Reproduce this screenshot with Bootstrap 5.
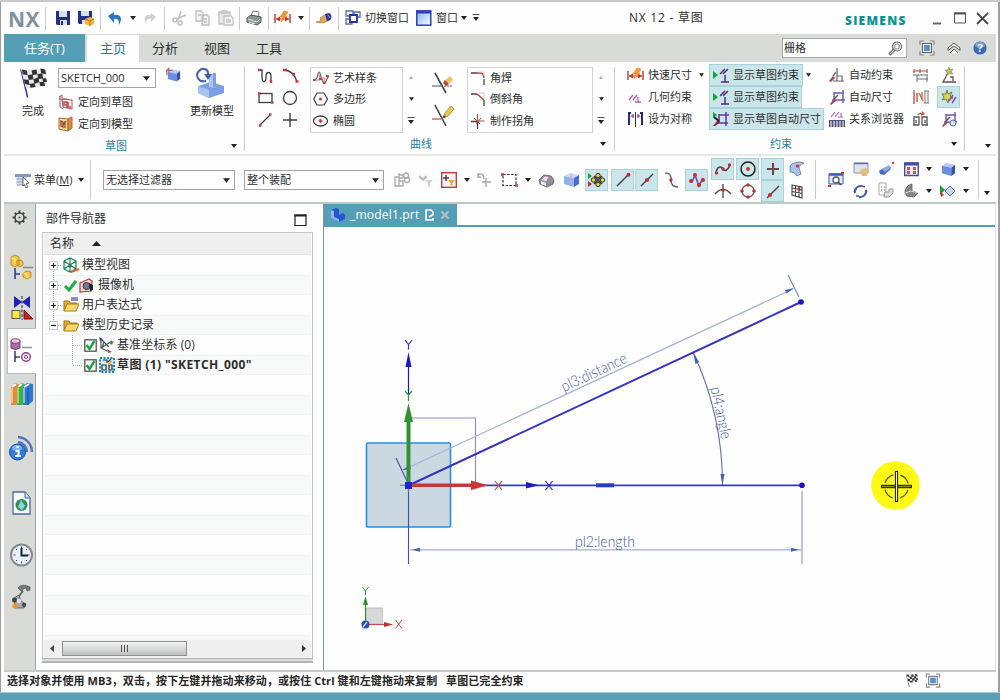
<!DOCTYPE html>
<html lang="zh-CN">
<head>
<meta charset="utf-8">
<title>NX 12 - 草图</title>
<meta name="viewport" content="width=device-width, initial-scale=1">
<link href="https://cdn.jsdelivr.net/npm/bootstrap@5.3.0/dist/css/bootstrap.min.css" rel="stylesheet">
<style>
:root{--teal:#559fb6;--bar:#d9dbd9;--hl:#cbe6ea;--hlb:#a9d3da;--ink:#2e2e2e}
html,body{height:100%;overflow:hidden}
body{font-family:"Open Sans","Noto Sans CJK SC",sans-serif;font-size:11px;line-height:16px;color:var(--ink);background:#fdfefd}
svg{display:block;flex:none;overflow:visible}
.win{width:1000px;height:700px;border-top:2px solid #c9cbca}
.frame{height:690px;border-left:1px solid #999c9b;border-right:2px solid #9ba19f;padding:0 2px 0 3px}
.bar{display:grid;align-items:center;justify-items:start;white-space:nowrap}
.vsep{width:1px;background:#c9cbca;align-self:stretch}
.titlebar{height:32px;padding-left:4px;grid-template-columns:37px 10px 23px 22px 8px 22px 13px 21px 8px 23px 23px 21px 7px 22px 6px 24px 11px 7px 22px 7px 20px 51px 20px 25px 11px 157px 216px 87px 21px 23px 1fr}
.titlebar .vsep{margin:5px 0 4px}
.nxlogo{font:bold 21px/24px "Open Sans",sans-serif;color:#7f929d;letter-spacing:.4px;margin-top:2px}
.wtitle{font-size:12px;letter-spacing:.75px}
.siemens{font:800 12px/14px "Open Sans",sans-serif;color:#0a9391;letter-spacing:1.25px;margin-top:5px}
.tabs{height:28px;background:var(--bar);font-size:13px}
.tabs .rtab{width:52px;text-align:center;line-height:28px}
.rtab.task{width:81px;background:var(--teal);color:#fff;margin-right:2px}
.rtab.on{background:#fdfefd;color:#1d7e9e;margin-top:1px;line-height:26px}
.search{width:125px;height:20px;border:1px solid #a9abaa;background:#fff;padding:0 3px 0 1px;font-size:11px}
.ribbon{height:94px;border-bottom:2px solid #e7e9e8}
.grp{border-right:1px solid #c9cbca;height:84px;margin-top:5px}
.gtitle{color:#2b7f9c;height:16px;line-height:16px}
.gfoot{margin-top:3px}
.tool{height:22px;white-space:nowrap}
.combo{border:1px solid #a4a6a5;background:#fff;display:flex;align-items:center;justify-content:space-between;padding:0 4px 0 2px;white-space:nowrap}
.gal{border:1px solid #d3d5d4;height:66px}
.hl{background:var(--hl);border:1px solid var(--hlb)}
.hl.tool{padding-left:2px}
.hl.cell{padding-left:0}
.selbar{height:48px;border-bottom:2px solid #bdc8c8;padding-left:11px;grid-template-rows:22px 22px;padding-top:2px;grid-template-columns:19px 43px 13px 13px 141px 149px 24px 23px 22px 14px 25px 23px 13px 25px 23px 26px 24px 27px 23px 26px 25px 25px 27px 27px 13px 25px 26px 25px 22px 15px 22px 15px 5px 1fr}
.selbar>*{grid-row:1/3}
.selbar>.r1{grid-row:1}
.selbar>.r2{grid-row:2}
.cell{width:23px;height:22px;display:flex;align-items:center;justify-content:center}
.main{height:466px}
.side{width:32px;background:var(--bar);border-right:1px solid #9fa2a1}
.side>div{display:flex;align-items:center;justify-content:center;padding-left:4px}
.side>.on{background:#fdfefd;border:1px solid #b9bbba;border-right:0;margin:0 -1px 0 3px;padding-left:0}
.nav-pane{width:288px;padding-left:6px;padding-right:10px;border-right:1px solid #84939b;font-size:12px}
.tree{border:1px solid #c4c6c5;border-bottom:0;height:426px;padding:0 1px}
.thead{height:22px;background:#eeefee;border-bottom:1px solid #dfe1e0;padding-left:6px}
.rows{height:385px;overflow:hidden;background:repeating-linear-gradient(#fdfefd 0 20px,#f1f3f2 20px 21px,#f8faf9 21px 39px,#f1f3f2 39px 40px)}
.trow{height:20px;white-space:nowrap}
.trow b{letter-spacing:.4px}
.hscroll{height:17px;background:#eeefee;padding:0 5px 0 6px}
.thumb{width:125px;height:15px;border:1px solid #8f9190;background:linear-gradient(#f4f4f4,#d9dadb 50%,#bfc1c4);margin-left:8px;gap:2px}
.thumb i{width:1px;height:7px;background:#555}
.under{height:5px;border-top:1px solid #a7a9a8;border-bottom:2px solid #b3b5b4;background:#dfe1e0}
.ftabs{height:23px;border-bottom:2px solid var(--teal)}
.ftab{width:133px;background:var(--teal);color:#fff;font-size:12px;letter-spacing:.2px}
.status{height:21px;font-weight:700;border-top:2px solid #c9cbca;font-size:11px;color:#262626;letter-spacing:.08px;padding:0 0 2px 3px}
.foot{height:8px;background:#5c9fb3;border-top:1px solid #a5c8d2}
.dim{font-family:Lato,"Open Sans",sans-serif;font-weight:300;fill:#3e56ad;font-size:15.5px}
</style>
</head>
<body>
<svg width="0" height="0" class="position-absolute">
<defs>
<symbol id="car" viewBox="0 0 6 4"><path d="M0 0h6L3 4z" fill="#222"/></symbol>
<symbol id="carb" viewBox="0 0 8 8"><path d="M.5 .6h7" stroke="#444"/><path d="M1 3h6L4 7z" fill="#222"/></symbol>
<symbol id="fs" viewBox="0 0 16 16"><path d="M1 5V1h4M11 1h4v4M15 11v4h-4M5 15H1v-4" fill="none" stroke="#888" stroke-width="1.2"/><rect x="3.5" y="3.5" width="9" height="9" fill="#fff" stroke="#56606a"/><rect x="5" y="5" width="6" height="6" fill="#5b8ec8"/></symbol>
<symbol id="flag" viewBox="0 0 32 32"><path d="M3 2l7 29" stroke="#3834b4" stroke-width="1.6"/><path d="M3 1c8 4 16-2 24 1l4 17c-9-2-15 5-23 2z" fill="#e9e9e9"/><path d="M4 2l5 1 1 5-5-1zM14 3l5-1 1 5-5 1zM23 1l5 1 1 5-5-1zM10 8l5-1 1 5-5 1zM20 7l5-1 1 5-5 1zM6 12l5 1 1 5-5-1zM16 12l5-2 1 5-5 2zM25 11l4 0 1 4-4 0zM12 17l5-1 1 4-5 1zM22 15l5 0 1 4-5 0z" fill="#333"/></symbol>
<symbol id="dimq" viewBox="0 0 17 16"><path d="M1 4v9M16 4v9" stroke="#c3322c" stroke-width="1.4"/><path d="M2 9h13" stroke="#c3322c"/><path d="M2 9l4-2.5v5zM15 9l-4-2.5v5z" fill="#c3322c"/><path d="M10 1l4 1-3 4h2l-6 6 2-5H6z" fill="#f79a2c" stroke="#dd6a1f" stroke-width=".5"/></symbol>
<symbol id="showc" viewBox="0 0 18 16"><path d="M1 4l5 4-5 4z" fill="#16a338"/><path d="M8 7l5-5M11 7l5-5M9 15h8M13 8v7" fill="none" stroke="#5b2a78" stroke-width="1.5"/></symbol>
<symbol id="autod" viewBox="0 0 16 16"><path d="M5 3v10M14 1v13M3 11h13M5 4h10" stroke="#6d57b5" stroke-width="1.4" fill="none"/><path d="M1 15l4-5 2 2-5 4z" fill="#a2474b"/><path d="M5 10l4-4" stroke="#555" stroke-width="1.5"/></symbol>
<symbol id="fold" viewBox="0 0 16 16"><path d="M1 14V4h5l1 2h7v3" fill="#e6b030" stroke="#9d721a"/><path d="M1 14l3-7h12l-3 7z" fill="#fbd867" stroke="#a67a1c"/></symbol>
<symbol id="cube" viewBox="0 0 16 16"><path d="M1 4l5-3 9 2-4 3z" fill="#b6c8f3"/><path d="M1 4l10 2v9L1 12z" fill="#6c8ee0"/><path d="M11 6l4-3v9l-4 3z" fill="#3554b0"/></symbol>
<symbol id="chk" viewBox="0 0 13 13"><rect x=".8" y=".8" width="11.4" height="11.4" fill="#fff" stroke="#444" stroke-width="1.2"/><path d="M2.5 6l3 4 5-8" fill="none" stroke="#1aa53c" stroke-width="2.4"/></symbol>
</defs>
</svg>
<div class="win">
<div class="frame">

<header class="bar titlebar">
<span class="nxlogo">NX</span><i class="vsep"></i>
<svg width="16" height="16"><path d="M1 1h14v14H2L1 14z" fill="#24327f"/><path d="M4 1h8v6H4z" fill="#d5e2f5"/><path d="M5 10h7v5H5z" fill="#dadde4"/><path d="M6 11h2v4H6z" fill="#24327f"/></svg>
<svg width="17" height="17"><path d="M0 1h14v13H1L0 13z" fill="#24327f"/><path d="M3 1h8v5H3z" fill="#d5e2f5"/><path d="M4 10h6v4H4z" fill="#ddd"/><path d="M7 9l5-2 4 2v5l-4 2-5-2z" fill="#f0b63a"/><path d="M7 9l5 2v5M12 11l4-2" fill="none" stroke="#b67b17"/></svg>
<i class="vsep"></i>
<svg width="14" height="16"><path d="M0 6l6-4v3c7-1 9 4 5 10 0-5-1-7-5-6v4z" fill="#2b77c7"/></svg>
<svg width="6" height="4"><use href="#car"/></svg>
<svg width="14" height="16"><path d="M13 7L8 3v2C2 4 0 9 3 14c0-4 2-6 5-5v3z" fill="#cfd0d0"/></svg>
<i class="vsep"></i>
<svg width="15" height="16" fill="none" stroke="#bfc0c0" stroke-width="1.6"><path d="M9 1L6 10M14 5L4 9"/><circle cx="3" cy="10" r="2"/><circle cx="8" cy="13" r="2"/></svg>
<svg width="16" height="16" fill="#f4f4f4" stroke="#bcbebe" stroke-width="1.3"><path d="M1 1h5l2 2v8H1zM7 5h5l2 2v8H7z"/><path d="M9 9h3M9 12h3M3 5h3"/></svg>
<svg width="16" height="16" fill="#e6e6e6" stroke="#c1c2c2" stroke-width="1.3"><path d="M1 2h11v12H1z"/><path d="M4 1h5v2H4z"/><path d="M6 6h7l2 2v7H6z" fill="#f6f6f6"/><path d="M8 10h5M8 12h5"/></svg>
<i class="vsep"></i>
<svg width="16" height="16"><path d="M5 6l2-5 6 1-1 5z" fill="#fff" stroke="#777"/><path d="M1 8l4-3 10 2v5l-4 3-10-3z" fill="#8a9496" stroke="#4c5556"/><path d="M2 9l9 3 3-3" fill="none" stroke="#e9ecec"/><path d="M3 12l6 2" stroke="#fff"/></svg>
<i class="vsep"></i>
<svg width="17" height="16"><use href="#dimq"/></svg>
<svg width="6" height="4"><use href="#car"/></svg>
<i class="vsep"></i>
<svg width="17" height="16"><path d="M0 12l5-1-1-3 6-4 4 6-7 3z" fill="#dba85f" stroke="#a77534" stroke-width=".7"/><path d="M9 4l4-1c3 1 3 5 1 7l-3 1z" fill="#3136a0"/><path d="M12 5l2 3" stroke="#aab0ee"/></svg>
<i class="vsep"></i>
<svg width="16" height="16" fill="#fff" stroke="#5b6f9c" stroke-width="1.3"><path d="M1 1h7v5H1zM1 9h6v5H1zM9 2h6v5H9z"/><path d="M5 5h7v7H5z" stroke="#1f2fae" stroke-width="1.8"/></svg>
<span>切换窗口</span>
<svg width="16" height="16"><defs><linearGradient id="wg" x1="0" y1="0" x2="1" y2="1"><stop offset="0" stop-color="#7fb0ee"/><stop offset="1" stop-color="#fff"/></linearGradient></defs><rect x=".8" y=".8" width="14" height="14.4" fill="url(#wg)" stroke="#2334ad" stroke-width="1.4"/><path d="M1 2.4h14" stroke="#2334ad" stroke-width="2"/></svg>
<span>窗口</span>
<svg width="6" height="4"><use href="#car"/></svg>
<svg width="8" height="8"><use href="#carb"/></svg>
<span class="wtitle">NX 12 - 草图</span>
<span class="siemens">SIEMENS</span>
<svg width="9" height="16"><path d="M1 13.500h8" stroke="#666" stroke-width="2"/></svg>
<svg width="13" height="14"><path d="M1.500 2h11v10h-11z" fill="none" stroke="#555"/><path d="M1 2.500h12" stroke="#555" stroke-width="2"/></svg>
<svg width="13" height="13"><path d="M1 1l11 11M12 1L1 12" stroke="#4a4a4a" stroke-width="1.8"/></svg>
</header>

<nav class="tabs d-flex">
<div class="rtab task">任务(T)</div><div class="rtab on">主页</div><div class="rtab">分析</div><div class="rtab">视图</div><div class="rtab">工具</div>
<div class="ms-auto d-flex align-items-center pe-2">
<div class="search d-flex align-items-center justify-content-between"><span>栅格</span>
<svg width="15" height="15" fill="#fff" stroke="#666" stroke-width="1.2"><circle cx="9" cy="5.500" r="4.500"/><circle cx="9" cy="5.500" r="2.500" stroke="#999"/><path d="M5.500 8L1 12.500 2.500 14 7 9.500z"/></svg></div>
<svg width="16" height="16" style="margin-left:12px"><use href="#fs"/></svg>
<svg width="14" height="14" style="margin-left:12px" fill="#fff" stroke="#555"><path d="M1 7l6-5 6 5v2.500L7 5 1 9.500zM3 12l4-4 4 4"/></svg>
<svg width="14" height="14" style="margin-left:12px;margin-right:1px"><circle cx="7" cy="7" r="6.600" fill="#3a67b8"/><ellipse cx="7" cy="4" rx="5" ry="3" fill="#7ea1dd"/><text x="7" y="11" text-anchor="middle" font-size="11" font-weight="700" fill="#fff">?</text></svg>
</div>
</nav>

<section class="ribbon d-flex">
<!-- sketch group -->
<div class="grp d-flex flex-column" style="width:241px">
<div class="d-flex" style="height:70px">
<div class="text-center" style="width:40px;margin-left:9px"><svg class="mx-auto" width="31" height="32"><use href="#flag"/></svg><div style="margin-top:4px">完成</div></div>
<div style="width:98px;margin-left:5px">
<div class="combo" style="height:20px;margin-top:1px;padding-right:5px"><span>SKETCH_000</span><svg width="7" height="5"><use href="#car"/></svg></div>
<div class="tool d-flex align-items-center" style="gap:5px;margin-top:3px"><svg width="15" height="16"><path d="M4 5l10 1v9l-9-2z" fill="#fff" stroke="#b4464a"/><path d="M1 3l3-2v3M2 2v11l3 2M1 5h8" fill="none" stroke="#a0585c"/><path d="M6 8h3v3H6zM10 8v5h3M8 13h2" fill="none" stroke="#b8484d" stroke-width="1.500"/></svg>定向到草图</div>
<div class="tool d-flex align-items-center" style="gap:5px"><svg width="15" height="16"><path d="M1 2l9 1v12l-9-2z" fill="#f8d8a2" stroke="#a8692c"/><path d="M10 3l4-2v11l-4 3z" fill="#e58b3c" stroke="#a8692c"/><path d="M3 5l2 1v5l-2-1zM7 5v7M5 9l3-4" fill="none" stroke="#8a3c2a" stroke-width="1.200"/></svg>定向到模型</div>
</div>
<svg width="15" height="16" style="margin:0 0 0 10px" viewBox="0 0 16 16"><use href="#cube" x="1" y="1" width="15" height="15"/><path d="M0 4l3-3v5M1 8V3h6" fill="none" stroke="#b4606a" stroke-width="1.200"/></svg>
<div class="text-center" style="width:48px;margin-left:7px"><svg class="mx-auto" width="34" height="32"><path d="M3 19l13-4 13 4v7l-15 5-11-5z" fill="#7ba0e4"/><path d="M3 19l11 4v8L3 26z" fill="#a7c2f2"/><path d="M14 7l7-1v15l-7-1z" fill="#aec6f5"/><path d="M18 6h3v15l-3-1z" fill="#7f9fe0"/><path d="M11 14C3 16 0 8 4 4c4-4 10-2 9 4" fill="none" stroke="#4461b2" stroke-width="2"/><path d="M9 7h8l-4 6z" fill="#4461b2"/></svg><div style="margin-top:4px">更新模型</div></div>
</div>
<div class="gfoot d-flex align-items-center"><span class="gtitle" style="margin-left:101px;margin-right:104px">草图</span><svg width="6" height="4"><use href="#car"/></svg></div>
</div>
<!-- curve group -->
<div class="grp d-flex flex-column" style="width:370px">
<div class="d-flex" style="height:70px">
<div class="d-grid" style="grid-template-columns:25px 24px;grid-auto-rows:22px;margin-left:12px;margin-top:-2px;align-items:center;align-content:start">
<svg width="17" height="16" fill="none" stroke="#3d3d3d" stroke-width="1.300"><path d="M2 2h3v7c0 6 4 6 4 0s5-6 5 0v5"/><path d="M1 2h2.500M14 12v3" stroke="#c63c3c" stroke-width="2.400"/></svg>
<svg width="17" height="16" fill="none" stroke="#3d3d3d" stroke-width="1.300"><path d="M3 2c7 1 10 5 12 12"/><path d="M1 2h4M10 6h3M13.500 13.500h3" stroke="#c63c3c" stroke-width="2.600"/></svg>
<svg width="17" height="16"><rect x="2" y="3.500" width="13" height="9" fill="none" stroke="#3d3d3d" stroke-width="1.300"/><path d="M1 3.500h2.500M14 12.500h2.500" stroke="#c63c3c" stroke-width="2.500"/></svg>
<svg width="17" height="16"><circle cx="8" cy="8" r="6.500" fill="none" stroke="#3d3d3d" stroke-width="1.300"/></svg>
<svg width="17" height="16"><path d="M3 13L13 3" stroke="#3d3d3d" stroke-width="1.300"/><path d="M2 13.500h2.500M12 2.500h2.500" stroke="#c63c3c" stroke-width="2.500"/></svg>
<svg width="17" height="16"><path d="M8 1v14M1 8h14" stroke="#3d3d3d" stroke-width="1.400"/></svg>
</div>
<div class="gal" style="width:93px;padding-left:2px;margin-left:4px">
<div class="tool d-flex align-items-center" style="gap:5px;height:20px"><svg width="15" height="16"><path d="M1 10c5 0 3-8 5-8s1 6 4 10 3-4 6-6" fill="none" stroke="#555" stroke-width="1.100"/><path d="M1 10h6L5.500 2M9 8h3l-1 6z" fill="none" stroke="#d07070" stroke-width=".9"/><path d="M0 10h2.500M6 9h3M10 13h2.500M13 6h2.500" stroke="#c63c3c" stroke-width="2.200"/></svg>艺术样条</div>
<div class="tool d-flex align-items-center" style="gap:5px"><svg width="15" height="16"><path d="M4 2h7l3.500 6-3.500 6H4L.7 8z" fill="none" stroke="#3d3d3d" stroke-width="1.200"/><circle cx="7.500" cy="8" r="1.600" fill="#c63c3c"/></svg>多边形</div>
<div class="tool d-flex align-items-center" style="gap:5px"><svg width="15" height="16"><ellipse cx="7.500" cy="8" rx="7" ry="5" fill="none" stroke="#3d3d3d" stroke-width="1.300"/><path d="M7.500 6v4M5.500 8h4" stroke="#c63c3c" stroke-width="1.700"/></svg>椭圆</div>
</div>
<div class="d-flex flex-column align-items-center" style="width:8px;margin-left:4px;padding-top:9px"><svg width="4" height="3"><path d="M0 3h4L2 0z" fill="#aaa"/></svg><svg width="5" height="4" style="margin-top:18px"><use href="#car"/></svg><svg width="8" height="8" style="margin-top:16px"><use href="#carb"/></svg></div>
<div style="width:22px;margin-left:17px;margin-top:4px">
<svg width="23" height="24"><path d="M3 2l11 20" stroke="#444" stroke-width="1.600"/><path d="M0 15h9" stroke="#777" stroke-width="1.300"/><path d="M12 15h9" stroke="#444" stroke-dasharray="2 1"/><path d="M12 10l6-5 3 4-6 5z" fill="#eec060"/><path d="M11 12l2-3 4 4-3 2z" fill="#bc4638"/></svg>
<svg width="23" height="24" style="margin-top:9px"><path d="M3 1l11 21" stroke="#444" stroke-width="1.600"/><path d="M0 15h9" stroke="#c9504c" stroke-width="1.300"/><path d="M11 14l2-5 6-7 3 3-6 7z" fill="#eec649" stroke="#8d7231" stroke-width=".7"/><path d="M11 14l1-3 2 2z" fill="#333"/></svg>
</div>
<div class="gal" style="width:126px;padding-left:3px;margin-left:13px">
<div class="tool d-flex align-items-center" style="gap:5px;height:20px"><svg width="14" height="16"><path d="M0 3h6M13 9v6" stroke="#444" stroke-width="1.300"/><path d="M6 3h3q4 0 4 5" fill="none" stroke="#d03a36" stroke-width="1.300"/><path d="M8 2h5v4" fill="none" stroke="#ccc"/></svg>角焊</div>
<div class="tool d-flex align-items-center" style="gap:5px"><svg width="14" height="16"><path d="M0 3h6M13 9v6" stroke="#444" stroke-width="1.300"/><path d="M6 3l7 6" fill="none" stroke="#d03a36" stroke-width="1.400"/><path d="M8 2h5v4" fill="none" stroke="#ccc"/></svg>倒斜角</div>
<div class="tool d-flex align-items-center" style="gap:5px"><svg width="14" height="16"><path d="M0 8.500h6M6.500 9v7" stroke="#444" stroke-width="1.300"/><path d="M6.500 1v7h7" fill="none" stroke="#a55" stroke-width="1.200"/><path d="M3 5l6 6M10 5l-5 6" stroke="#c23b37"/></svg>制作拐角</div>
</div>
<div class="d-flex flex-column align-items-center" style="width:8px;margin-left:4px;padding-top:9px"><svg width="4" height="3"><path d="M0 3h4L2 0z" fill="#aaa"/></svg><svg width="5" height="4" style="margin-top:18px"><use href="#car"/></svg><svg width="8" height="8" style="margin-top:16px"><use href="#carb"/></svg></div>
</div>
<div class="gfoot d-flex align-items-center"><span class="gtitle" style="margin-left:165px;margin-right:168px">曲线</span><svg width="6" height="4"><use href="#car"/></svg></div>
</div>
<!-- constraint group -->
<div class="grp d-flex flex-column" style="width:350px">
<div class="d-flex" style="height:70px;margin-top:-3px">
<div style="width:94px;padding-left:12px">
<div class="tool d-flex align-items-center"><svg width="17" height="16" class="me-1"><use href="#dimq"/></svg>快速尺寸<svg width="5" height="4" style="margin-left:7px"><use href="#car"/></svg></div>
<div class="tool d-flex align-items-center"><svg width="17" height="16" class="me-1"><path d="M2 11l4-5M6 11l4-5M8 13h6M11 8v5" fill="none" stroke="#b35dbb" stroke-width="1.300"/></svg>几何约束</div>
<div class="tool d-flex align-items-center"><svg width="17" height="16" class="me-1"><path d="M4 2H2v12M13 2h2v12" fill="none" stroke="#2b2a7a" stroke-width="2"/><path d="M8.500 1v15" stroke="#333"/><path d="M4 5h3M10 5h3M6 3v4M11 3v4" stroke="#a24bab" stroke-width="1.300"/></svg>设为对称</div>
</div>
<div style="width:116px">
<div class="d-flex align-items-center"><div class="tool hl d-flex align-items-center" style="width:94px"><svg width="18" height="16" style="margin-right:3px"><use href="#showc"/></svg>显示草图约束</div><svg width="5" height="4" style="margin-left:3px"><use href="#car"/></svg></div>
<div class="tool hl d-flex align-items-center" style="width:93px"><svg width="18" height="16" style="margin-right:3px"><use href="#showc"/></svg>显示草图约束</div>
<div class="tool hl d-flex align-items-center" style="width:115px"><svg width="18" height="16" style="margin-right:3px"><path d="M7 3v9M14 1v14M4 12h12M7 4h10" stroke="#6b2fa0" stroke-width="1.500" fill="none"/><path d="M1 1l4 3-4 3z" fill="#16a338"/><path d="M1 15l5-6 2 2-5 4z" fill="#8a1f33"/><path d="M2 6l5 4" stroke="#222" stroke-width="2"/></svg>显示草图自动尺寸</div>
</div>
<div style="padding-left:4px;width:87px">
<div class="tool d-flex align-items-center"><svg width="16" height="16" class="me-1"><path d="M8 1v13M4 14h11M8 9h5v5" fill="none" stroke="#666" stroke-width="1.200"/><path d="M0 14l4-5 2 2-4 4z" fill="#a2474b"/><path d="M4 9l3-4" stroke="#777" stroke-width="1.500"/></svg>自动约束</div>
<div class="tool d-flex align-items-center"><svg width="16" height="16" class="me-1"><use href="#autod"/></svg>自动尺寸</div>
<div class="tool d-flex align-items-center"><svg width="16" height="16" class="me-1"><path d="M2 6l4-5M6 6l4-5M9 6h5M12 2v4" stroke="#b35dbb" stroke-width="1.200"/><path d="M0 9h16v7H0z" fill="#50547f"/><path d="M2 10v6M5 10v6M8 10v6M11 10v6M14 10v6" stroke="#fff"/></svg>关系浏览器</div>
</div>
<div style="width:24px;padding-left:1px">
<div class="tool d-flex align-items-center"><svg width="16" height="16"><path d="M1 4h13M1 2v4M14 2v4M7 2v4" stroke="#c3423c" stroke-width="1.200"/><path d="M0 8h15M4 12h11M4 8v7M14 8v7" stroke="#666a85"/></svg></div>
<div class="tool d-flex align-items-center"><svg width="16" height="16"><path d="M1 1v14M4 4v9" stroke="#c3423c" stroke-width="1.300"/><path d="M6 4l4 8M9 3v8" stroke="#d36a3c" stroke-width="1.400"/><path d="M12 2v12M15 2v12M11 2h5M11 14h5" stroke="#777"/></svg></div>
<div class="tool d-flex align-items-center"><svg width="16" height="16"><path d="M1 14V6h5v8M9 14V6h5v8M0 14h6M9 14h6M3 9v3M12 9v3" fill="none" stroke="#555" stroke-width="1.300"/><path d="M5 4c1-2 3-2 5-1" fill="none" stroke="#d1553b" stroke-width="1.400"/><path d="M9 0l3 3-4 2z" fill="#d1553b"/></svg></div>
</div>
<div style="width:24px;padding-left:1px">
<div class="tool cell"><svg width="16" height="16"><path d="M7 6L2 15h13M9 10h3v4" fill="none" stroke="#555" stroke-width="1.300"/><path d="M8 0l1 3 3-1-2 3 2 2-4 0-2 1 0-3-2-2 3 0z" fill="#c4c159" stroke="#6b6b30" stroke-width=".5"/></svg></div>
<div class="tool cell hl"><svg width="16" height="16"><path d="M6 1l1 4 4-2-2 4 3 2-4 1-1 4-2-4-4 1 2-3-2-3 4 0z" fill="#d8d94c" stroke="#4e5628" stroke-width=".7"/><path d="M8 12l4-6M11 14l4-6" stroke="#8c47a4" stroke-width="1.400"/></svg></div>
<div class="tool cell"><svg width="16" height="16"><use href="#autod"/><circle cx="12" cy="12" r="3" fill="#dfe1fb" stroke="#5763b9"/></svg></div>
</div>
</div>
<div class="d-flex align-items-center" style="margin-top:6px"><span class="gtitle" style="margin-left:155px;margin-right:159px">约束</span><svg width="6" height="4"><use href="#car"/></svg></div>
</div>
<svg width="6" height="4" style="margin:82px 0 0 20px"><use href="#car"/></svg>
</section>

<!-- selection bar -->
<section class="bar selbar">
<svg width="16" height="16"><path d="M1 4h11v9H1z" fill="#d9deee"/><path d="M0 2h16v3H0z" fill="#8695c4"/><path d="M2 7h9M2 10h9M2 13h9" stroke="#8d96ad"/><path d="M8 5l6 6-3 .5 2 3.500-2 1-1.500-3.500L8 14z" fill="#fff" stroke="#444" stroke-width=".8"/></svg>
<span>菜单(<u>M</u>)</span>
<svg width="6" height="4" style="margin-left:1px"><use href="#car"/></svg>
<i class="vsep" style="margin:2px 0 3px"></i>
<div class="combo" style="width:132px;height:20px"><span>无选择过滤器</span><svg width="7" height="5"><use href="#car"/></svg></div>
<div class="combo" style="width:140px;height:20px"><span>整个装配</span><svg width="7" height="5"><use href="#car"/></svg></div>
<svg width="16" height="16" fill="none" stroke="#a9abab" stroke-width="1.300" style="margin-left:1px"><path d="M1 5h4v9H1zM5 9h4v5H5zM5 1v5h4V3H5"/><circle cx="12" cy="3.500" r="2.500"/><circle cx="13" cy="8" r="2.500"/></svg>
<svg width="16" height="16" style="margin-left:1px"><path d="M1 3l4 3 3-3 1 3-4 3-4-3z" fill="#bbb"/><path d="M7 8h8l-3 3v4l-2-1v-3z" fill="#d0d1d0"/></svg>
<svg width="16" height="16" style="margin-left:1px"><rect x=".7" y=".7" width="14.600" height="14.600" fill="#fff6f4" stroke="#b9403f" stroke-width="1.400"/><path d="M5 3v6M2 6h6" stroke="#444" stroke-width="1.500"/><path d="M7 8h7l-2.500 3v3l-2-1v-2z" fill="#eda53a"/></svg>
<svg width="6" height="4" style="margin-left:2px"><use href="#car"/></svg>
<svg width="15" height="16" fill="none" stroke="#a6a8a8" stroke-width="1.400"><path d="M2 4c2-4 6-2 6 3M2 1v4h3M10 6v9M6 10h9"/></svg>
<svg width="17" height="16"><rect x="2" y="2.500" width="13" height="11" fill="none" stroke="#333" stroke-width="1.200" stroke-dasharray="2.500 1.500"/><path d="M0 2.500h3M14 13.500h3" stroke="#c63c3c" stroke-width="2.600"/></svg>
<svg width="6" height="4" style="margin-left:1px"><use href="#car"/></svg>
<svg width="16" height="16" style="margin-left:1px"><path d="M1 8l5-5 7 1 3 4-1 4-6 3-7-3z" fill="#8b919f" stroke="#565c68" stroke-width=".8"/><path d="M3 8l4-4 4 1-3 5zM9 10l6-2" fill="#dfe1e6" stroke="#c28084" stroke-width=".7"/><path d="M3 9l5 2v3l-5-2z" fill="#e8eaf0"/></svg>
<svg width="17" height="16" style="margin-left:1px"><path d="M1 4l6-3 9 2-5 3z" fill="#c7dcf8"/><path d="M1 4l10 2v9L1 12z" fill="#8fb2ee"/><path d="M11 6l5-3v9l-5 3z" fill="#4a6dd0"/><path d="M8 2v10" stroke="#e7a4a8"/></svg>
<div class="cell hl"><svg width="17" height="16"><path d="M0 1l4 3-4 3z" fill="#179c35"/><path d="M0 9l4 3-4 3z" fill="#c52f2f"/><g fill="#f1cf40" stroke="#333"><circle cx="10" cy="3.500" r="2.200"/><circle cx="10" cy="12.500" r="2.200"/><circle cx="5.500" cy="8" r="2.200"/><circle cx="14.500" cy="8" r="2.200"/></g><path d="M6 4l8 8M14 4l-8 8" stroke="#333" stroke-width="1.600"/></svg></div>
<div class="cell hl"><svg width="16" height="16"><path d="M2 14L13 3" stroke="#444" stroke-width="1.500"/><circle cx="13.500" cy="2.800" r="2" fill="#c22f2f"/></svg></div>
<div class="cell hl"><svg width="16" height="16"><path d="M2 14L14 2" stroke="#444" stroke-width="1.500"/><circle cx="8" cy="8" r="2" fill="#c22f2f"/></svg></div>
<svg width="14" height="16" style="margin-left:3px"><path d="M0 1c5 0 6 2 6 7s2 7 7 7" fill="none" stroke="#666" stroke-width="1.500"/><circle cx="6" cy="8" r="1.700" fill="#c22f2f"/></svg>
<div class="cell hl"><svg width="16" height="16"><path d="M1 10h2l3-7 4 11 4-8" fill="none" stroke="#7a4fae" stroke-width="1.700"/><g fill="#c22f2f"><circle cx="2" cy="9" r="2"/><circle cx="6" cy="3" r="2"/><circle cx="10" cy="13" r="2"/><circle cx="14" cy="8" r="2"/></g></svg></div>
<div class="cell hl r1" style="grid-column:21"><svg width="16" height="16"><path d="M1 12c1-7 5-7 7-4s5 1 7-4" fill="none" stroke="#444" stroke-width="1.500"/><g fill="#c22f2f"><circle cx="1.500" cy="12" r="1.700"/><circle cx="8" cy="8" r="1.700"/><circle cx="14.500" cy="4" r="1.700"/></g></svg></div>
<div class="cell r2" style="grid-column:21"><svg width="16" height="16"><path d="M0 11c5-6 11-6 16 0M8 1v14" fill="none" stroke="#555" stroke-width="1.400"/><circle cx="8" cy="7" r="1.700" fill="#c22f2f"/></svg></div>
<div class="cell hl r1" style="grid-column:22"><svg width="16" height="16"><circle cx="8" cy="8" r="7" fill="none" stroke="#222" stroke-width="1.500"/><circle cx="8" cy="8" r="1.900" fill="#c22f2f"/></svg></div>
<div class="cell r2" style="grid-column:22"><svg width="16" height="16"><circle cx="8" cy="8" r="6" fill="none" stroke="#666" stroke-width="1.400"/><g fill="#c22f2f"><circle cx="8" cy="2" r="1.800"/><circle cx="8" cy="14" r="1.800"/><circle cx="2" cy="8" r="1.800"/><circle cx="14" cy="8" r="1.800"/></g></svg></div>
<div class="cell hl r1" style="grid-column:23"><svg width="16" height="16"><path d="M8 2v12M2 8h12" stroke="#222" stroke-width="1.500"/><circle cx="8" cy="8" r="1.500" fill="#c22f2f"/></svg></div>
<div class="cell hl r2" style="grid-column:23"><svg width="16" height="16"><path d="M2 15L14 3" stroke="#444" stroke-width="1.500"/><circle cx="5" cy="12" r="2" fill="#c22f2f"/></svg></div>
<svg class="r1" style="grid-column:24;margin-left:1px" width="16" height="16"><path d="M1 5c2-3 6-4 10-4l4 1c-3 1-5 3-5 5l2 6-4 2c-2-3-4-4-7-4z" fill="#a7c4ec" stroke="#56779f" stroke-width=".8"/><circle cx="8.500" cy="5" r="1.600" fill="#c22f2f"/></svg>
<svg class="r2" style="grid-column:24;margin-left:3px" width="13" height="16"><path d="M1 2l10 2v11L1 12zM4.500 3v10M8 3v11M1 5l10 2M1 8.500l10 2" fill="none" stroke="#444" stroke-width="1.100"/><circle cx="8" cy="6" r="1.500" fill="#c22f2f"/></svg>
<i class="vsep" style="grid-column:25;margin:2px 0 3px"></i>
<svg style="grid-column:26" width="16" height="16"><path d="M1 2h14v10H1z" fill="#e5ebfa" stroke="#4758ad"/><path d="M1 2.500h14" stroke="#4758ad" stroke-width="2.500"/><circle cx="8" cy="8" r="3" fill="#fff" stroke="#555" stroke-width="1.300"/><path d="M10 10l3 3" stroke="#555" stroke-width="1.700"/><path d="M0 14h3M13 1h3" stroke="#c33" stroke-width="2"/></svg>
<svg class="r1" style="grid-column:27" width="16" height="16"><path d="M1 2h14v10H1z" fill="#dfe3ef" stroke="#8d95a5"/><path d="M1 2.500h14" stroke="#5c6ea6" stroke-width="1.500"/><path d="M9 8l4-1 2 3-1 5H9L7 10z" fill="#e6bd7e"/></svg>
<svg class="r2" style="grid-column:27" width="15" height="15" fill="none" stroke="#425c9f" stroke-width="2"><path d="M2 9A6 6 0 0 1 9 2M13 6a6 6 0 0 1-7 7"/><path d="M3 12h3M9 2l3 1M1 8l2-3M14 7l-2 3" stroke-width="1.500"/></svg>
<svg class="r1" style="grid-column:28" width="16" height="16"><path d="M0 10l3-2 7-3 2 2-1 2-6 5-4-1z" fill="#4b67c5"/><path d="M3 8l7-4 2 3-6 4z" fill="#91a6e6"/><circle cx="14" cy="2" r="1.300" fill="#d44"/></svg>
<svg class="r2" style="grid-column:28;margin-left:-1px" width="16" height="16"><path d="M1 0h7v12H1z" fill="#fff" stroke="#aaa"/><path d="M3 4h1M6 4h1M3 7h1M6 7h1" stroke="#999" stroke-width="1.500"/><path d="M7 9h4V6h4v4l-4 4H6z" fill="#ddd" stroke="#999"/></svg>
<svg class="r1" style="grid-column:29" width="15" height="15"><path d="M.7 1h13.600v12.500H.7z" fill="#eef0fb" stroke="#3e4da7" stroke-width="1.400"/><path d="M1 2h13" stroke="#3e4da7" stroke-width="3"/><path d="M3 5h3v7H3zM9 5h3v7H9z" fill="#c6564c"/><path d="M2 8.500h11" stroke="#eef0fb"/></svg>
<svg class="r2" style="grid-column:29" width="15" height="16"><path d="M1 10C1 5 4 2 8 1v7l6 2-4 4-7-1z" fill="#868889" stroke="#555" stroke-width=".8"/><path d="M1 10l6-2 7 2" fill="none" stroke="#d8d8d8"/></svg>
<svg class="r1" style="grid-column:30" width="6" height="4"><use href="#car"/></svg>
<svg class="r2" style="grid-column:30" width="6" height="4"><use href="#car"/></svg>
<svg class="r1" style="grid-column:31" width="15" height="15" viewBox="0 0 16 16"><use href="#cube"/></svg>
<svg class="r2" style="grid-column:31;margin-left:-2px" width="17" height="16"><path d="M1 2l5 5-5 5z" fill="#1f9d3b"/><path d="M1 8l4 4-3 2z" fill="#c33"/><path d="M11 3l5 5-5 5-5-5z" fill="#cbd5f0" stroke="#5f6fb0"/></svg>
<svg class="r1" style="grid-column:32" width="6" height="4"><use href="#car"/></svg>
<svg class="r2" style="grid-column:32" width="6" height="4"><use href="#car"/></svg>
<i class="vsep" style="grid-column:33;margin:2px 0 3px"></i>
<svg class="r2" style="grid-column:34;margin:4px 0 0 1px" width="6" height="4"><use href="#car"/></svg>
</section>

<main class="main d-flex">
<aside class="side d-flex flex-column">
<div style="height:26px;padding-left:0"><svg width="15" height="15"><path d="M7.500 .5v14M.5 7.500h14M2.800 2.800l9.400 9.400M12.200 2.800L2.800 12.200" stroke="#444" stroke-width="2"/><circle cx="7.500" cy="7.500" r="4.500" fill="#d9dbd9" stroke="#444" stroke-width="1.500"/><circle cx="7.500" cy="7.500" r="1" fill="#444"/></svg></div>
<div style="height:74px"><svg width="23" height="25"><path d="M1 2l4-2 4 2v8l-4 2-4-2zM7 6l4-1 2 2v3l-3 2-3-2zM13 18l4-2 4 1v5l-4 2-4-2z" fill="#f3c43e" stroke="#b0821e" stroke-width=".8"/><path d="M1 3l4 1v5M13 18l4 1v4" fill="none" stroke="#fff1a8"/><path d="M13 12.500h10" stroke="#888" stroke-width="1.500"/><path d="M5 13v11M5 19h5" stroke="#2e3c8f" stroke-width="1.600"/></svg></div>
<div style="height:24px;margin-top:-8px"><svg width="22" height="24"><path d="M3 0l8 6-8 6zM19 0l-8 6 8 6z" fill="#1b22b8"/><path d="M11 0v24" stroke="#222" stroke-dasharray="3 1.500"/><rect x="1" y="14.500" width="8" height="8" fill="#f7ea3c" stroke="#555"/><path d="M13 14v9h9z" fill="#c4221f" stroke="#711"/></svg></div>
<div class="on" style="height:46px;margin-top:8px"><svg width="24" height="26"><path d="M1 3v7q4 3 9 0V3z" fill="#b468ab" stroke="#704069"/><ellipse cx="5.500" cy="3" rx="4.500" ry="2.200" fill="#efc9ea" stroke="#704069"/><path d="M12 9.500h10" stroke="#999" stroke-width="1.600"/><path d="M5 13v11M5 19h5" stroke="#3b3f86" stroke-width="1.600"/><circle cx="16" cy="19" r="4.300" fill="#fff" stroke="#8d3a80" stroke-width="1.400"/><circle cx="16" cy="19" r="1.600" fill="none" stroke="#8d3a80"/></svg></div>
<div style="height:40px"><svg width="24" height="24"><path d="M1 5l4-4 4 1v18l-3 3H1z" fill="#e68a36"/><path d="M7 5l4-4 4 1v18l-3 3H7z" fill="#3db53a"/><path d="M13 5l4-4 6 1v17l-5 4h-5z" fill="#2f7ad1"/><path d="M2 5l4-3M8 5l4-3M14 5l5-3" stroke="#fff" stroke-width="1.800"/><path d="M2 6v15M8 6v15M14 6v15" stroke="#fff" stroke-opacity=".6" stroke-width="1.500"/><path d="M18 6v17" stroke="#1a4f9c"/></svg></div>
<div style="height:68px"><svg width="25" height="26"><path d="M9 2a15 15 0 0 1 14 15M9 7a10 10 0 0 1 9 10M9 11a6 6 0 0 1 5 6" fill="none" stroke="#4e74bd" stroke-width="2.400"/><circle cx="8.500" cy="17" r="8" fill="#2f7de0" stroke="#1c4f9f"/><ellipse cx="8" cy="13" rx="5" ry="3" fill="#7fb5f5"/><path d="M6.500 16h3v5M6 21h6M7.500 12h2.500" stroke="#fff" stroke-width="2.200" fill="none"/></svg></div>
<div style="height:41px"><svg width="19" height="24"><path d="M1 1h12l5 6v16H1z" fill="#f5faff" stroke="#496a9c" stroke-width="1.300"/><path d="M13 1v6h5" fill="#cadcf2" stroke="#496a9c"/><circle cx="9.500" cy="14" r="6" fill="#2f9150"/><path d="M9 9l4 6-3 4-4-3z" fill="#8fd0e6"/></svg></div>
<div style="height:64px"><svg width="23" height="24"><circle cx="11.500" cy="12" r="10.500" fill="#e8f0fa" stroke="#85898e" stroke-width="2"/><path d="M11.500 3.500v2M11.500 18.500v2M3.500 12h2M17.500 12h2M6 6l1 1M17 6l-1 1M6 18l1-1M17 18l-1-1" stroke="#445"/><path d="M11.500 5v7.500H18" fill="none" stroke="#15253e" stroke-width="2"/></svg></div>
<div style="height:20px"><svg width="20" height="24" style="margin-left:-2px"><path d="M7 3c3-4 8-3 12-1l0 3-3 1-1-3-3 1-1 3z" fill="#77797a" stroke="#444" stroke-width=".6"/><path d="M12 6l-4 5" stroke="#666" stroke-width="2"/><path d="M3 13l5-3 2 6 5 3-2 4H4z" stroke="#565656" stroke-width=".8" fill="#a5a7ae"/><circle cx="3.500" cy="15" r="2.500" fill="#444"/><circle cx="8" cy="16" r="2.300" fill="#dfe3ef"/><circle cx="13" cy="20" r="2" fill="#444"/><circle cx="4" cy="21" r="2.600" fill="#ee952b"/></svg></div>
</aside>

<section class="nav-pane">
<div class="d-flex align-items-center justify-content-between" style="height:28px;padding:1px 6px 0 4px"><span>部件导航器</span><svg width="13" height="12" style="margin-top:2px"><path d="M1 1h11v10.500H1z" fill="#fff" stroke="#222" stroke-width="1.200"/><path d="M.500 1.500h12" stroke="#222" stroke-width="2"/></svg></div>
<div class="tree">
<div class="thead d-flex align-items-center"><span>名称</span><svg width="9" height="5" style="margin-left:18px"><path d="M0 5h9L4.500 0z" fill="#222"/></svg></div>
<div class="rows">
<div class="trow d-flex align-items-center" style="padding-left:5px"><svg width="13" height="20" style="margin-right:1px"><path d="M4.500 14v6" stroke="#aaa" stroke-dasharray="1 1"/><rect x=".5" y="6.500" width="8" height="8" fill="#fff" stroke="#c8c8c8"/><path d="M2 10.500h5M4.500 8v5" stroke="#222" stroke-width="1.200"/><path d="M9 10.500h4" stroke="#aaa" stroke-dasharray="1 1"/></svg><svg width="16" height="16" style="margin-right:3px"><path d="M1 4l6-3 6 3v8l-6 3-6-3zM1 4l6 4 6-4M7 1v14M1 12l6-4 6 4" fill="none" stroke="#128556" stroke-width="1.200"/><path d="M8 15l8-3" stroke="#e05d40" stroke-width="2"/></svg>模型视图</div>
<div class="trow d-flex align-items-center" style="padding-left:5px"><svg width="13" height="20" style="margin-right:2px"><path d="M4.500 0v20" stroke="#aaa" stroke-dasharray="1 1"/><rect x=".5" y="6.500" width="8" height="8" fill="#fff" stroke="#c8c8c8"/><path d="M2 10.500h5M4.500 8v5" stroke="#222" stroke-width="1.200"/><path d="M9 10.500h3" stroke="#aaa" stroke-dasharray="1 1"/></svg><svg width="13" height="13" style="margin-right:2px"><path d="M1 7l4 4 7-9" fill="none" stroke="#1fae3a" stroke-width="3"/></svg><svg width="15" height="15" style="margin-right:4px"><path d="M1 5l9-4 3 2-1 10-11 1z" fill="#f6dada" stroke="#b83b3b" stroke-width="1.200"/><circle cx="7.500" cy="8" r="3.500" fill="#6b78a8" stroke="#333"/><path d="M10 5l4 2v5l-3 1z" fill="#222"/></svg>摄像机</div>
<div class="trow d-flex align-items-center" style="padding-left:5px"><svg width="13" height="20" style="margin-right:1px"><path d="M4.500 0v20" stroke="#aaa" stroke-dasharray="1 1"/><rect x=".5" y="6.500" width="8" height="8" fill="#fff" stroke="#c8c8c8"/><path d="M2 10.500h5M4.500 8v5" stroke="#222" stroke-width="1.200"/><path d="M9 10.500h4" stroke="#aaa" stroke-dasharray="1 1"/></svg><svg width="16" height="16" style="margin-right:3px"><use href="#fold"/><path d="M8 0h7v4H8z" fill="#8a8ec4"/></svg>用户表达式</div>
<div class="trow d-flex align-items-center" style="padding-left:5px"><svg width="13" height="20" style="margin-right:1px"><path d="M4.500 0v6" stroke="#aaa" stroke-dasharray="1 1"/><rect x=".5" y="6.500" width="8" height="8" fill="#fff" stroke="#c8c8c8"/><path d="M2 10.500h5" stroke="#222" stroke-width="1.200"/><path d="M9 10.500h4" stroke="#aaa" stroke-dasharray="1 1"/></svg><svg width="16" height="16" style="margin-right:3px"><use href="#fold"/></svg>模型历史记录</div>
<div class="trow d-flex align-items-center" style="padding-left:28px"><svg width="10" height="20" style="margin-right:2px"><path d="M.5 0v20M1 10.500h9" stroke="#aaa" stroke-dasharray="1 1" fill="none"/></svg><svg width="13" height="13" style="margin-right:2px"><use href="#chk"/></svg><svg width="15" height="16" style="margin-right:3px"><path d="M2 2v9l6 3M2 2l8 8M2 11l11-7M5 5l-2 6" fill="none" stroke="#48525c" stroke-width="1.200"/><path d="M10 6l5-2-2 4z" fill="#2c9a46"/><path d="M8 12l5 3-4 1z" fill="#c23c3c"/><path d="M0 0l4 2-3 2z" fill="#3441b0"/></svg><span style="letter-spacing:.1px">基准坐标系 (0)</span></div>
<div class="trow d-flex align-items-center" style="padding-left:28px"><svg width="10" height="20" style="margin-right:2px"><path d="M.5 0v10M1 10.500h9" stroke="#aaa" stroke-dasharray="1 1" fill="none"/></svg><svg width="13" height="13" style="margin-right:2px"><use href="#chk"/></svg><svg width="16" height="16" style="margin-right:2px"><rect x="1" y="1" width="14" height="14" fill="#d3ecf8" stroke="#0d86c8" stroke-width="2" stroke-dasharray="2 1.500"/><path d="M3 8h4v5H3zM4 3h4v3M10 8h3v5h-3zM9 5l3-3" fill="none" stroke="#333" stroke-width="1.200"/><path d="M9 6l3-3 1 2-3 3z" fill="#e9a73c"/></svg><b>草图 (1) "SKETCH_000"</b></div>
</div>
<div class="hscroll d-flex align-items-center"><svg width="4" height="7"><path d="M4 0v7L0 3.500z" fill="#444"/></svg><div class="thumb d-flex align-items-center justify-content-center"><i></i><i></i><i></i></div><svg class="ms-auto" width="4" height="7"><path d="M0 0v7l4-3.500z" fill="#333"/></svg></div>
</div>
<div class="under"></div>
</section>

<section class="flex-grow-1 border-end">
<div class="ftabs"><div class="ftab d-flex align-items-center h-100" style="padding-left:6px">
<svg width="15" height="16" style="margin-right:5px"><path d="M1 3l5-2 3 1v6l4-2 2 2v4l-6 3-8-4z" fill="#2555d0"/><path d="M1 3l3 1v6l5 2v3l-8-4z" fill="#8db4f4"/></svg><span>_model1.prt</span>
<svg width="10" height="12" style="margin-left:6px"><path d="M8 5V3L6 1H1v10h7V9" fill="none" stroke="#fff" stroke-width="1.600"/><path d="M4 8l5-3" stroke="#fff" stroke-width="1.500"/></svg>
<svg width="8" height="8" style="margin-left:6px"><path d="M.500 .500l7 7M7.500 .500l-7 7" stroke="#b5c2c9" stroke-width="1.900"/></svg></div></div>
<svg width="671" height="442" viewBox="324 227 671 442">
<rect x="366.500" y="443" width="84" height="84" fill="#cbd8e1" stroke="#2a8ee0" stroke-width="1.600" rx="1"/>
<path d="M409 418H475.500V484" fill="none" stroke="#8d8bdc" stroke-width="1.200"/>
<path d="M408.500 487V564M396 458L407 481" stroke="#3957a8" stroke-width="1.100"/>
<path d="M402 470.500L793 289" stroke="#a7b1d8" stroke-width="1.300"/>
<path d="M788 275L799 297" stroke="#7d8fc8" stroke-width="1.200"/>
<path d="M794 288l-9 2 1.500 3.500zM402 470.500l9-2-1.500-3.500z" fill="#3f63b3"/>
<path d="M410 549.800H801" stroke="#a3aed6" stroke-width="1.300"/><path d="M802 491V564" stroke="#a7b1d8" stroke-width="1.500"/>
<path d="M412 549.800l8-2v4zM799 549.800l-8-2v4z" fill="#3f63b3"/>
<path d="M693.500 353A314 314 0 0 1 722.500 485" fill="none" stroke="#5a70b5" stroke-width="1.100"/>
<path d="M693 352l6 10-3.500 2zM722.500 485l-2-11h4z" fill="#3f63b3"/>
<path d="M408.500 485.500L801 302" stroke="#3431c4" stroke-width="2"/>
<path d="M408.500 485.300H801" stroke="#3a37c6" stroke-width="1.800"/>
<path d="M596 485.300h18" stroke="#2340ba" stroke-width="4"/>
<circle cx="801" cy="302" r="2.800" fill="#1712cf"/><circle cx="802" cy="485.300" r="2.800" fill="#1712cf"/>
<path d="M408.500 366V395" stroke="#1c1ac4" stroke-width="1.200"/><path d="M408.500 352l3 15h-6z" fill="#1c1ac4"/>
<path d="M526 482l13 3.300-13 3.300z" fill="#1c1ac4"/>
<path d="M408.500 482V421" stroke="#31932f" stroke-width="4"/><path d="M408.500 403l4.500 19h-9z" fill="#31932f"/>
<path d="M412 485.300h62" stroke="#bf3a3c" stroke-width="3.400"/><path d="M471 480.500l17 4.800-17 4.800z" fill="#cf3435"/>
<path d="M400 485.300h17M408.500 478v14" stroke="#3a8d90"/><rect x="405" y="482" width="7" height="7" fill="#1b25c9"/>
<g fill="none" stroke-width="1.200"><path d="M405 340l3.500 4.500 3.500-4.500M408.500 344.500v5" stroke="#3a37c6"/><path d="M405 391l3.500 4 3.500-4M408.500 395v6" stroke="#31932f"/><path d="M495 481l7 9M502 481l-7 9" stroke="#c24a4e"/><path d="M545.500 481l7 9M552.500 481l-7 9" stroke="#2522c8"/></g>
<text class="dim" transform="translate(564 392) rotate(-25)" textLength="71" lengthAdjust="spacingAndGlyphs">pl3:distance</text>
<text class="dim" transform="translate(575 546.500)" textLength="60" lengthAdjust="spacingAndGlyphs">pl2:length</text>
<text class="dim" transform="translate(710.500 388) rotate(78)" textLength="53" lengthAdjust="spacingAndGlyphs">pl4:angle</text>
<rect x="366" y="608" width="16.500" height="16" fill="#d7d9d8" stroke="#bfc1c0"/>
<path d="M365.500 622V604" stroke="#31932f" stroke-width="1.200"/><path d="M365.500 596l2.500 9h-5z" fill="#31932f"/><path d="M362.500 587l3 4 3-4M365.500 591v4" stroke="#31932f" fill="none"/>
<path d="M368 624.500h17" stroke="#c44"/><path d="M384 622l9 2.500-9 2.500z" fill="#c22f2f"/><path d="M395.500 620l6.500 8.500M402 620l-6.500 8.500" stroke="#c44"/>
<circle cx="365.500" cy="624.500" r="4" fill="#2a4bb4"/><path d="M363 627l4-5" stroke="#cfe0ff" stroke-width="1.300"/>
<circle cx="895.500" cy="485.500" r="24.300" fill="#fdf914"/>
<circle cx="896.500" cy="486.500" r="12" fill="none" stroke="#55520a" stroke-width="1.200" stroke-dasharray="11.850 7" stroke-dashoffset="-3.500"/>
<path d="M881 486.500h31" stroke="#222" stroke-width="3.400"/><path d="M882 486.500h29" stroke="#8d8a1a" stroke-width="1.400"/>
<path d="M896.500 471v31" stroke="#111" stroke-width="3.200"/><path d="M896.500 472v29" stroke="#fdf9b0" stroke-width="1.200"/>
</svg>
</section>
</main>

<footer class="status d-flex align-items-center"><span style="white-space:pre">选择对象并使用 MB3，双击，按下左键并拖动来移动，或按住 Ctrl 键和左键拖动来复制   草图已完全约束</span>
<svg class="ms-auto" width="14" height="15"><use href="#flag"/></svg><svg width="16" height="15" style="margin-left:6px;margin-right:55px"><use href="#fs"/></svg></footer>
</div>
<div class="foot"></div>
</div>
<script src="https://cdn.jsdelivr.net/npm/bootstrap@5.3.0/dist/js/bootstrap.bundle.min.js"></script>
</body>
</html>
